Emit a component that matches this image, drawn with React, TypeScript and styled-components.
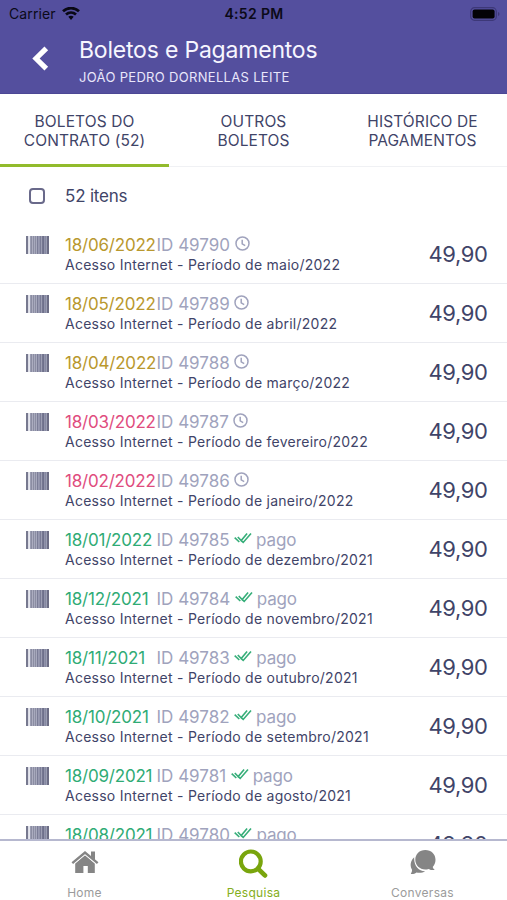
import React from "react";
import styled, { createGlobalStyle } from "styled-components";

const GlobalStyle = createGlobalStyle`
  *, *::before, *::after { box-sizing: border-box; }
  body { margin: 0; font-family: Inter, "Liberation Sans", sans-serif; }
`;

const INK = "#3f4468";
const MUTED = "#a0a3bd";

const Screen = styled.div`
  display: flex;
  flex-direction: column;
  width: 507px;
  height: 900px;
  overflow: hidden;
  background: #fff;
  color: ${INK};
  white-space: nowrap;
`;

const Header = styled.header`
  flex: none;
  height: 94px;
  background: #544f9e;
  border-bottom: 1px solid #4c4795;
`;

const StatusBar = styled.div`
  display: grid;
  grid-template-columns: 1fr auto 1fr;
  align-items: center;
  height: 28px;
  padding: 0 7px 0 9px;
  color: #0b0a18;
  font-size: 14px;
  line-height: 28px;
`;

const Carrier = styled.div`
  display: flex;
  align-items: center;
  gap: 6px;
  letter-spacing: 0.1px;
`;

const Clock = styled.div`
  margin-right: 1px;
  font-size: 14px;
  font-weight: 600;
  letter-spacing: 0.35px;
`;

const BatterySlot = styled.div`
  display: flex;
  justify-content: flex-end;
  margin-top: -1px;
`;

const TitleBar = styled.div`
  display: flex;
  padding-top: 8px;
`;

const BackButton = styled.button`
  display: flex;
  width: 79px;
  padding: 10px 0 0 32px;
  border: 0;
  background: none;
`;

const Title = styled.h1`
  margin: 0;
  color: #f7f6ff;
  font-size: 23px;
  font-weight: 400;
  line-height: 29px;
  letter-spacing: -0.2px;
`;

const Customer = styled.div`
  color: #e9e7fb;
  font-size: 13px;
  line-height: 24px;
  letter-spacing: 0.32px;
`;

const Tabs = styled.nav`
  flex: none;
  display: grid;
  grid-template-columns: repeat(3, 1fr);
  height: 73px;
`;

const Tab = styled.div<{ $active?: boolean }>`
  padding-top: 17.5px;
  border-bottom: ${(p) => (p.$active ? "3px solid #92bb2c" : "1px solid #f0f1f4")};
  font-size: 15.5px;
  line-height: 19px;
  letter-spacing: 0.1px;
  text-align: center;
  white-space: pre-line;
`;

const Summary = styled.div`
  flex: none;
  display: flex;
  align-items: center;
  gap: 20px;
  height: 57px;
  padding-left: 29px;
  font-size: 17px;
  letter-spacing: -0.2px;
`;

const Checkbox = styled.span`
  width: 16px;
  height: 16px;
  border: 2px solid #69698a;
  border-radius: 4px;
`;

const List = styled.main`
  flex: 1;
  min-height: 0;
  overflow: hidden;
`;

const Row = styled.article`
  display: flex;
  height: 59.05px;
  padding: 11px 19.5px 0 26px;

  & + & {
    padding-top: 10px;
    border-top: 1px solid #eaebf0;
  }
`;

const BarcodeCell = styled.div`
  width: 39px;
  padding-top: 1px;
`;

const Details = styled.div`
  flex: 1;
`;

const Meta = styled.div`
  display: flex;
  align-items: center;
  height: 20px;
  color: ${MUTED};
  font-size: 17px;
  line-height: 20px;
`;

const Due = styled.span<{ $color: string }>`
  width: 91.5px;
  color: ${(p) => p.$color};
  letter-spacing: -0.2px;
`;

const StatusMark = styled.span`
  display: flex;
  margin: -4px 0 0 4.5px;
`;

const Paid = styled.span`
  margin-left: 4px;
  letter-spacing: -0.15px;
`;

const Description = styled.div`
  font-size: 14px;
  line-height: 19px;
  letter-spacing: 0.25px;
`;

const Amount = styled.div`
  padding-top: 5px;
  font-size: 22px;
  line-height: 28px;
  letter-spacing: -0.4px;
`;

const BottomNav = styled.nav`
  flex: none;
  display: grid;
  grid-template-columns: repeat(3, 1fr);
  height: 61px;
  border-top: 2px solid #b6b8cf;
  background: #fff;
`;

const NavItem = styled.div<{ $active?: boolean }>`
  display: flex;
  flex-direction: column;
  align-items: center;
  padding-top: 7px;
  color: ${(p) => (p.$active ? "#83ae20" : "#9b9b9b")};
  font-size: 12px;
  line-height: 16px;
  letter-spacing: 0.28px;
`;

const NavIcon = styled.div`
  height: 37px;
`;

const WifiIcon = () => (
  <svg width="18" height="14" viewBox="0 0.8 18 14" fill="none" stroke="#090814" strokeWidth="2.7">
    <path d="M1 5.1C5.6 .8 12.4 .8 17 5.1" />
    <path d="M4 8.3c2.9-2.6 7.1-2.6 10 0" />
    <path d="M6.3 10.6 9 13.7l2.7-3.1c-1.5-1.3-3.9-1.3-5.4 0Z" fill="#090814" stroke="none" />
  </svg>
);

const BatteryIcon = () => (
  <svg width="30" height="14" viewBox="0 0 30 14">
    <rect x=".7" y=".7" width="25.6" height="12.6" rx="3.8" fill="none" stroke="#3d3878" strokeWidth="1.2" />
    <rect x="2.6" y="2.6" width="22" height="8.8" rx="2" fill="#030206" />
    <path d="M28 5c2 .8 2 3.2 0 4Z" fill="#3d3878" />
  </svg>
);

const BackIcon = () => (
  <svg width="17" height="25" viewBox="0 0 17 25" fill="none" stroke="#fff" strokeWidth="5.2">
    <path d="M14.3 2.3 4 12.5l10.3 10.2" />
  </svg>
);

const bars: [number, number, string][] = [
  [0, 2, "#77798f"],
  [2, 1.7, "#dcdde7"],
  [4.4, 1.6, "#8b8da2"],
  [6.8, 1.2, "#8b8da2"],
  [8.7, 1.6, "#8b8da2"],
  [11, 1.5, "#7b7d97"],
  [13.4, 2, "#7b7d97"],
  [16.1, 2.4, "#6e708b"],
  [19.2, 1, "#7b7d97"],
  [20.8, 2.2, "#6c6d85"],
];

const BarcodeIcon = () => (
  <svg width="23" height="18" viewBox="0 0 23 18">
    <rect x="4" width="19" height="18" fill="#b4b6c9" />
    {bars.map(([x, w, fill]) => (
      <rect key={x} x={x} width={w} height="18" fill={fill} />
    ))}
  </svg>
);

const PendingIcon = () => (
  <svg width="15" height="15" viewBox="0 0 15 15" fill="none" stroke="#a0a3bd" strokeWidth="1.5">
    <circle cx="7.5" cy="7.5" r="6.5" />
    <path d="M7.2 3.8v4l3 1.8" />
  </svg>
);

const PaidIcon = () => (
  <svg width="18" height="12" viewBox="0 0 18 12" fill="none" stroke="#36ae79" strokeWidth="1.6">
    <path d="M.7 5.7 5.3 10" />
    <path d="m3.8 5 3.4 3.6L13.1 1.4" />
    <path d="m7.2 8.6 2 1.8L17 1.4" />
  </svg>
);

const HomeIcon = () => (
  <svg width="28" height="28" viewBox="0 -1 28 28" fill="#858585">
    <path d="M4.2 14.4 14 6.2l9.8 8.2V24h-7v-7h-4.4v7h-8.2Z" />
    <path d="M1.3 14.1 14 3.5l12.7 10.6" fill="none" stroke="#fff" strokeWidth="4" />
    <path d="M1.3 14.1 14 3.5l12.7 10.6" fill="none" stroke="#858585" strokeWidth="2.4" />
    <path d="M20 2.5h4v8.7l-4-3.4Z" />
  </svg>
);

const SearchIcon = () => (
  <svg width="30" height="30" viewBox="0.8 0 30 30" fill="none" stroke="#79a50d" strokeWidth="4.2">
    <circle cx="12.6" cy="13.4" r="9.9" />
    <path d="m19.7 20.6 7 6.8" strokeWidth="4.8" strokeLinecap="round" />
  </svg>
);

const ChatIcon = () => (
  <svg width="26" height="27" viewBox="0 -0.5 26 27" fill="#858585">
    <path d="M4.2 8.7C-.2 12.8 0 18 2 21.3c.2 1.8-.6 3-1.2 4.2 2.3.2 4.1-.3 5.6-1.6 2.9.9 6.3.4 8.8-1.2C9 23 3.6 17.4 4.2 8.7Z" />
    <path d="M15.3 1.5c5.9 0 10.2 4.1 10.2 9.8 0 3-1.1 5.5-2.8 7.2.3 1.2 1.2 2.2 2 3-2.4.3-4.3-.1-6-1.1-6.9 2.3-13.4-2.5-13.4-9.1 0-5.6 4.2-9.8 10-9.8Z" />
  </svg>
);

const AMBER = "#b9982e";
const PINK = "#df4c7e";
const GREEN = "#2fab75";

const invoices = [
  { due: "18/06/2022", id: 49790, period: "maio/2022", color: AMBER },
  { due: "18/05/2022", id: 49789, period: "abril/2022", color: AMBER },
  { due: "18/04/2022", id: 49788, period: "março/2022", color: AMBER },
  { due: "18/03/2022", id: 49787, period: "fevereiro/2022", color: PINK },
  { due: "18/02/2022", id: 49786, period: "janeiro/2022", color: PINK },
  { due: "18/01/2022", id: 49785, period: "dezembro/2021", color: GREEN, paid: true },
  { due: "18/12/2021", id: 49784, period: "novembro/2021", color: GREEN, paid: true },
  { due: "18/11/2021", id: 49783, period: "outubro/2021", color: GREEN, paid: true },
  { due: "18/10/2021", id: 49782, period: "setembro/2021", color: GREEN, paid: true },
  { due: "18/09/2021", id: 49781, period: "agosto/2021", color: GREEN, paid: true },
  { due: "18/08/2021", id: 49780, period: "julho/2021", color: GREEN, paid: true },
];

export default function App() {
  return (
    <Screen>
      <GlobalStyle />
      <Header>
        <StatusBar>
          <Carrier>
            Carrier <WifiIcon />
          </Carrier>
          <Clock>4:52 PM</Clock>
          <BatterySlot>
            <BatteryIcon />
          </BatterySlot>
        </StatusBar>
        <TitleBar>
          <BackButton aria-label="Voltar">
            <BackIcon />
          </BackButton>
          <div>
            <Title>Boletos e Pagamentos</Title>
            <Customer>JOÃO PEDRO DORNELLAS LEITE</Customer>
          </div>
        </TitleBar>
      </Header>
      <Tabs>
        <Tab $active>{"BOLETOS DO\nCONTRATO (52)"}</Tab>
        <Tab>{"OUTROS\nBOLETOS"}</Tab>
        <Tab>{"HISTÓRICO DE\nPAGAMENTOS"}</Tab>
      </Tabs>
      <Summary>
        <Checkbox />
        52 itens
      </Summary>
      <List>
        {invoices.map((invoice) => (
          <Row key={invoice.id}>
            <BarcodeCell>
              <BarcodeIcon />
            </BarcodeCell>
            <Details>
              <Meta>
                <Due $color={invoice.color}>{invoice.due}</Due>
                <span>ID {invoice.id}</span>
                <StatusMark>{invoice.paid ? <PaidIcon /> : <PendingIcon />}</StatusMark>
                {invoice.paid && <Paid>pago</Paid>}
              </Meta>
              <Description>Acesso Internet - Período de {invoice.period}</Description>
            </Details>
            <Amount>49,90</Amount>
          </Row>
        ))}
      </List>
      <BottomNav>
        <NavItem>
          <NavIcon>
            <HomeIcon />
          </NavIcon>
          Home
        </NavItem>
        <NavItem $active>
          <NavIcon>
            <SearchIcon />
          </NavIcon>
          Pesquisa
        </NavItem>
        <NavItem>
          <NavIcon>
            <ChatIcon />
          </NavIcon>
          Conversas
        </NavItem>
      </BottomNav>
    </Screen>
  );
}
